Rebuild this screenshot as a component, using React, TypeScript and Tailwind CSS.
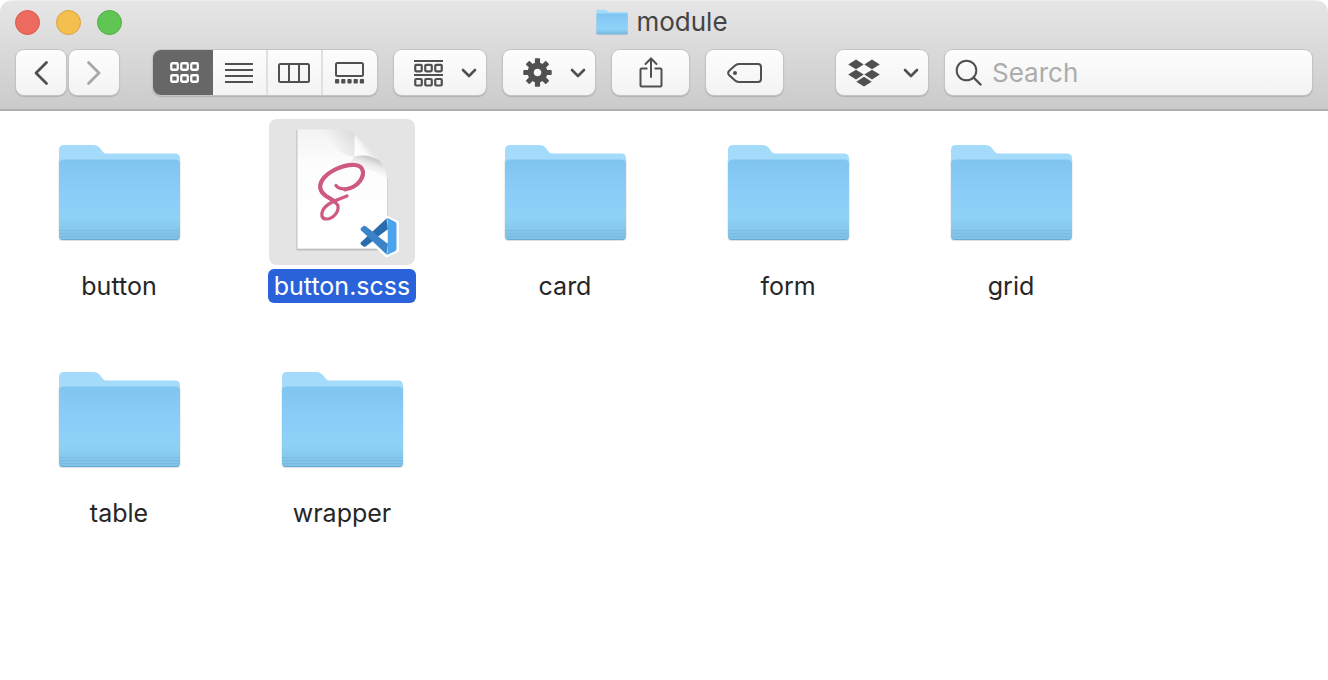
import React, { useId, useState } from "react";

const control =
  "flex h-[45px] shrink-0 items-center rounded-lg bg-gradient-to-b from-[#fdfdfd] to-[#f3f3f3] text-[#505050] shadow-[0_0_0_1px_#c4c4c4,0_1px_1px_1px_#b0b0b0]";

function FolderIcon({ className }: { className: string }) {
  const id = useId();
  return (
    <svg viewBox="0 -1 124 100" className={className} aria-hidden="true">
      <defs>
        <linearGradient id={id} x1="0" y1="0" x2="0" y2="1">
          <stop offset="0" stopColor="#80c5f0" />
          <stop offset="0.4" stopColor="#89cdf8" />
          <stop offset="0.72" stopColor="#8fd2f7" />
          <stop offset="0.87" stopColor="#86c8ee" />
          <stop offset="1" stopColor="#7fc0e6" />
        </linearGradient>
      </defs>
      <rect x="1.500" y="14" width="122" height="84" rx="4" fill="#000" opacity="0.12" />
      <path d="M2 7Q2 2 7 2H36Q40 2 42 4L46 9Q47 10.500 50 10.500H118Q123 10.500 123 15.500V80H2Z" fill="#a4dbfb" />
      <path d="M2 21Q2 16.500 7 16.500H118Q123 16.500 123 21V93Q123 96.500 119.500 96.500H5.500Q2 96.500 2 93Z" fill={`url(#${id})`} />
      <path d="M2 87.500H123M2 90.500H123M2 93.500H123" stroke="#74b6de" strokeWidth="1" opacity="0.6" />
      <path d="M3 95.500Q4 96.500 6 96.500H119Q121 96.500 122 95.500" stroke="#6aaad4" fill="none" />
    </svg>
  );
}

function ScssFileIcon() {
  return (
    <svg viewBox="0 0 146 146" className="size-[146px]" aria-hidden="true">
      <defs>
        <linearGradient id="page" x1="0" y1="0" x2="0" y2="1">
          <stop offset="0" stopColor="#f3f3f3" />
          <stop offset="0.3" stopColor="#fdfdfd" />
          <stop offset="1" stopColor="#ffffff" />
        </linearGradient>
        <linearGradient id="flap" gradientUnits="userSpaceOnUse" x1="86" y1="37" x2="99" y2="27">
          <stop offset="0" stopColor="#ffffff" />
          <stop offset="0.6" stopColor="#fafafa" />
          <stop offset="1" stopColor="#e2e2e2" />
        </linearGradient>
        <linearGradient id="flapShade" gradientUnits="userSpaceOnUse" x1="104" y1="37" x2="98" y2="54">
          <stop offset="0" stopColor="#000" stopOpacity="0.24" />
          <stop offset="0.5" stopColor="#000" stopOpacity="0.07" />
          <stop offset="1" stopColor="#000" stopOpacity="0" />
        </linearGradient>
        <linearGradient id="bend" gradientUnits="userSpaceOnUse" x1="62" y1="30" x2="86" y2="18">
          <stop offset="0" stopColor="#000" stopOpacity="0" />
          <stop offset="1" stopColor="#000" stopOpacity="0.1" />
        </linearGradient>
      </defs>
      <path d="M27.500 11H72L119 60V132H27.500Z" fill="#000" opacity="0.08" />
      <path d="M28 11.500V130.500H118.500" fill="none" stroke="#bdbdbd" />
      <path d="M28.500 10.500H72C79 10.500 83 13 88 18L108 38.500C115 46 118 52 118 64V129.500H28.500Z" fill="url(#page)" />
      <path d="M50 10.500H72C79 10.500 83 13 86 16V38Q70 38 50 10.500Z" fill="url(#bend)" />
      <path d="M85.500 37.500C93 35 102 36 110 41C115.500 47 118 54 118 62C112 54 100 48 76 50Z" fill="url(#flapShade)" />
      <path d="M85.500 16V37.500C93 35 102 36 111 42L108 38.500L88 18Z" fill="url(#flap)" />
      <g fill="none" stroke="#cf5a7f" strokeLinecap="round" strokeLinejoin="round">
        <path d="M67 66.500C71 72 84 71 91 62C96 55 95 47 86 46C75 45 60 52 54 60C49 67 51 73 57 77C61 80 68 83 69 87C70 93 64 100 57.500 100C52 100 52 95 54 91C57 85 65 82 78 77" strokeWidth="3.200" />
        <path d="M76 70.400C82 70 88 66 91 62C96 55 95 47 86 46C75 45 60 52 54 60C49 67 51 73 57 77L66 82.500" strokeWidth="4.200" />
      </g>
      <g stroke="#fff" strokeWidth="5" strokeLinejoin="round" fill="#fff">
        <path d="M117.500 99.500L127.500 104V131L117.500 135.500L93 112.500V109L96 107.500Z" />
        <path d="M92.500 111.500L95.500 108.500L118 126V135.500ZM92.500 123.500L95.500 126.500L118 109V99.500Z" />
      </g>
      <path d="M117.500 99.500L92 123.200Q91 124.500 92 125.500L94.500 127.500Q95.500 128.200 97 127.200L119 110.500Z" fill="#2b6cac" />
      <path d="M92 111.200Q91 110 92 109L94.500 107Q95.500 106.400 97 107.400L119 124.500L117.500 135.500Z" fill="#3a83c8" />
      <path d="M117 99.800Q118 99 119.500 99.600L126 102.700Q127.500 103.500 127.500 105V130Q127.500 131.500 126 132.200L119.500 135.300Q118 136 117 135Q118.500 135 118.500 133V102Q118.500 100 117 99.800Z" fill="#4ba3ec" />
      <path d="M118.500 110.500V124.500L109.300 117.500Z" fill="#fff" />
    </svg>
  );
}

function Chevron() {
  return (
    <svg viewBox="0 0 16 10" className="h-2.5 w-4" fill="none" stroke="currentColor" strokeWidth="2.600" strokeLinecap="round" strokeLinejoin="round" aria-hidden="true">
      <path d="M2 2L8 8L14 2" />
    </svg>
  );
}

function SquareRow({ y }: { y: number }) {
  return (
    <>
      {[1.25, 11.25, 21.25].map((x) => (
        <rect key={x} x={x} y={y} width="6.500" height="6.500" rx="1" />
      ))}
    </>
  );
}

function IconsView() {
  return (
    <svg viewBox="0 0 29 22" className="h-[22px] w-[29px]" fill="none" stroke="currentColor" strokeWidth="2.300" aria-hidden="true">
      <SquareRow y={1.25} />
      <SquareRow y={13.25} />
    </svg>
  );
}

function ListView() {
  return (
    <svg viewBox="0 0 28 22" className="h-[22px] w-7" stroke="currentColor" strokeWidth="2" aria-hidden="true">
      <path d="M0 2H28M0 8H28M0 14H28M0 20H28" />
    </svg>
  );
}

function ColumnsView() {
  return (
    <svg viewBox="0 0 32 22" className="h-[22px] w-8" fill="none" stroke="currentColor" strokeWidth="2" aria-hidden="true">
      <rect x="1" y="2" width="30" height="18" rx="1.500" />
      <path d="M11 2V20M21 2V20" />
    </svg>
  );
}

function GalleryView() {
  return (
    <svg viewBox="0 0 29 22" className="h-[22px] w-[29px]" fill="currentColor" aria-hidden="true">
      <rect x="1" y="1" width="27" height="13" rx="1.500" fill="none" stroke="currentColor" strokeWidth="2" />
      {[0, 6.2, 12.4, 18.6, 24.8].map((x) => (
        <rect key={x} x={x} y="17" width="4.200" height="4.500" rx="0.800" />
      ))}
    </svg>
  );
}

function GroupIcon() {
  return (
    <svg viewBox="0 0 29 28" className="h-7 w-[29px]" fill="none" stroke="currentColor" strokeWidth="2.200" aria-hidden="true">
      <path d="M0 2H29M0 16H29" strokeWidth="2" />
      <SquareRow y={5.8} />
      <SquareRow y={20} />
    </svg>
  );
}

function GearIcon() {
  return (
    <svg viewBox="-14.500 -14.500 29 29" className="size-[29px]" aria-hidden="true">
      <g fill="currentColor">
        {[0, 45, 90, 135, 180, 225, 270, 315].map((a) => (
          <rect key={a} transform={`rotate(${a})`} x="-2.600" y="-14.200" width="5.200" height="7" rx="0.800" />
        ))}
      </g>
      <circle r="6.900" fill="none" stroke="currentColor" strokeWidth="6.200" />
    </svg>
  );
}

function ShareIcon() {
  return (
    <svg viewBox="0 0 24 32" className="h-8 w-6" fill="none" stroke="currentColor" strokeWidth="2" aria-hidden="true">
      <path d="M8.500 11.500H2.500Q1.500 11.500 1.500 12.500V28.500Q1.500 29.500 2.500 29.500H21.500Q22.500 29.500 22.500 28.500V12.500Q22.500 11.500 21.500 11.500H15.500" />
      <path d="M12 20V1.500M6.500 7L12 1.500L17.500 7" strokeLinecap="round" />
    </svg>
  );
}

function TagIcon() {
  return (
    <svg viewBox="0 0 35 22" className="h-[22px] w-[35px]" fill="none" stroke="currentColor" strokeWidth="2" aria-hidden="true">
      <path d="M12 2H31Q34 2 34 5V17Q34 20 31 20H12Q9.500 20 7.500 18L2 13Q0.300 11 2 9L7.500 4Q9.500 2 12 2Z" />
      <circle cx="8" cy="11" r="2" fill="currentColor" stroke="none" />
    </svg>
  );
}

function DropboxIcon() {
  return (
    <svg viewBox="0 0 32 28" className="h-7 w-8" fill="currentColor" aria-hidden="true">
      <path d="M8 0.500L15.700 5.400L8 10.300L0.200 5.400ZM24 0.500L31.800 5.400L24 10.300L16.300 5.400ZM8 10.700L15.700 15.600L8 20.500L0.200 15.600ZM24 10.700L31.800 15.600L24 20.500L16.300 15.600ZM16 17.800L23.700 22.700L16 27.600L8.300 22.700Z" />
    </svg>
  );
}

const views = [
  { name: "Icons", icon: <IconsView />, className: "w-[60px] pl-0.5" },
  { name: "List", icon: <ListView />, className: "w-[53px] pr-0.5" },
  { name: "Columns", icon: <ColumnsView />, className: "w-[55px] border-l-2 border-[#e0e0e0] pr-0.5" },
  { name: "Gallery", icon: <GalleryView />, className: "w-[56px] border-l-2 border-[#e0e0e0] pr-0.5" },
];

const files = [
  { name: "button", folder: true },
  { name: "button.scss", folder: false },
  { name: "card", folder: true },
  { name: "form", folder: true },
  { name: "grid", folder: true },
  { name: "table", folder: true },
  { name: "wrapper", folder: true },
];

function Toolbar() {
  const [view, setView] = useState("Icons");
  return (
    <div className="flex items-center px-4">
      <nav className="mr-[34px] flex gap-[3px]" aria-label="History">
        <button className={`${control} w-[50px] justify-center`} aria-label="Back">
          <svg viewBox="0 0 16 26" className="h-[26px] w-4" fill="none" stroke="currentColor" strokeWidth="2.800" strokeLinecap="round" strokeLinejoin="round" aria-hidden="true">
            <path d="M13.500 2.500L3 13L13.500 23.500" />
          </svg>
        </button>
        <button className={`${control} w-[50px] justify-center`} aria-label="Forward">
          <svg viewBox="0 0 16 26" className="h-[26px] w-4 text-[#a6a6a6]" fill="none" stroke="currentColor" strokeWidth="2.800" strokeLinecap="round" strokeLinejoin="round" aria-hidden="true">
            <path d="M2.500 2.500L13 13L2.500 23.500" />
          </svg>
        </button>
      </nav>
      <div className={`${control} mr-[17px] overflow-hidden`} role="group" aria-label="View">
        {views.map((v) => (
          <button
            key={v.name}
            aria-label={v.name}
            aria-pressed={view === v.name}
            onClick={() => setView(v.name)}
            className={`flex h-full items-center justify-center ${v.className} ${view === v.name ? "bg-[#676767] text-white" : ""}`}
          >
            {v.icon}
          </button>
        ))}
      </div>
      <button className={`${control} mr-[17px] w-[92px] justify-between pr-[9px] pl-5`} aria-label="Group items" aria-haspopup="menu">
        <GroupIcon />
        <Chevron />
      </button>
      <button className={`${control} mr-[17px] w-[92px] justify-between pr-[9px] pl-5`} aria-label="Actions" aria-haspopup="menu">
        <GearIcon />
        <Chevron />
      </button>
      <button className={`${control} mr-[17px] w-[77px] justify-center`} aria-label="Share">
        <ShareIcon />
      </button>
      <button className={`${control} mr-[53px] w-[77px] justify-center`} aria-label="Edit tags">
        <TagIcon />
      </button>
      <button className={`${control} mr-[17px] w-[92px] justify-between pr-[9px] pl-3`} aria-label="Dropbox" aria-haspopup="menu">
        <DropboxIcon />
        <Chevron />
      </button>
      <label className={`${control} min-w-0 flex-1 gap-2.5 px-2.5`}>
        <svg viewBox="0 0 27 27" className="size-[27px] shrink-0" fill="none" stroke="currentColor" strokeWidth="2" strokeLinecap="round" aria-hidden="true">
          <circle cx="11.500" cy="11.500" r="9.800" />
          <path d="M18.500 18.500L25.500 25.500" strokeWidth="2.400" />
        </svg>
        <input type="search" aria-label="Search" placeholder="Search" className="w-full min-w-0 bg-transparent text-[26px] text-[#404040] outline-none placeholder:text-[#acacac]" />
      </label>
    </div>
  );
}

export default function App() {
  const [selected, setSelected] = useState("button.scss");
  return (
    <div className="min-h-screen bg-white font-['Inter','Liberation_Sans',sans-serif]">
      <header className="rounded-t-xl border-t border-b-2 border-t-[#efefef] border-b-[#afafaf] bg-gradient-to-b from-[#e6e6e6] to-[#cbcbcb] pb-3.5">
        <div className="grid h-[42px] grid-cols-[1fr_auto_1fr] items-center">
          <div className="flex gap-4 pl-[15px]">
            <button aria-label="Close" className="size-[25px] rounded-full border border-[#d9584e] bg-[#ec6a5e]" />
            <button aria-label="Minimize" className="size-[25px] rounded-full border border-[#dba33f] bg-[#f4bf4f]" />
            <button aria-label="Zoom" className="size-[25px] rounded-full border border-[#4eae42] bg-[#61c554]" />
          </div>
          <div className="flex items-center gap-2 pr-1">
            <FolderIcon className="h-[26px] w-8" />
            <h1 className="text-[26px] leading-8 text-[#444444]">module</h1>
          </div>
        </div>
        <div className="pt-[7px]">
          <Toolbar />
        </div>
      </header>
      <main className="grid grid-cols-[repeat(auto-fill,222px)] gap-x-px gap-y-6 pt-2 pl-2">
        {files.map((f) => {
          const on = selected === f.name;
          return (
            <button key={f.name} onClick={() => setSelected(f.name)} aria-pressed={on} className="flex h-[203px] flex-col items-center gap-1">
              <span className={`flex size-[146px] shrink-0 items-center justify-center rounded-lg ${on ? "bg-[#e4e4e4]" : ""}`}>
                {f.folder ? <FolderIcon className="h-[100px] w-[124px]" /> : <ScssFileIcon />}
              </span>
              <span className={`rounded-md px-1.5 text-[25px] leading-[34px] ${on ? "bg-[#2962d9] text-white" : "text-[#262626]"}`}>{f.name}</span>
            </button>
          );
        })}
      </main>
    </div>
  );
}
